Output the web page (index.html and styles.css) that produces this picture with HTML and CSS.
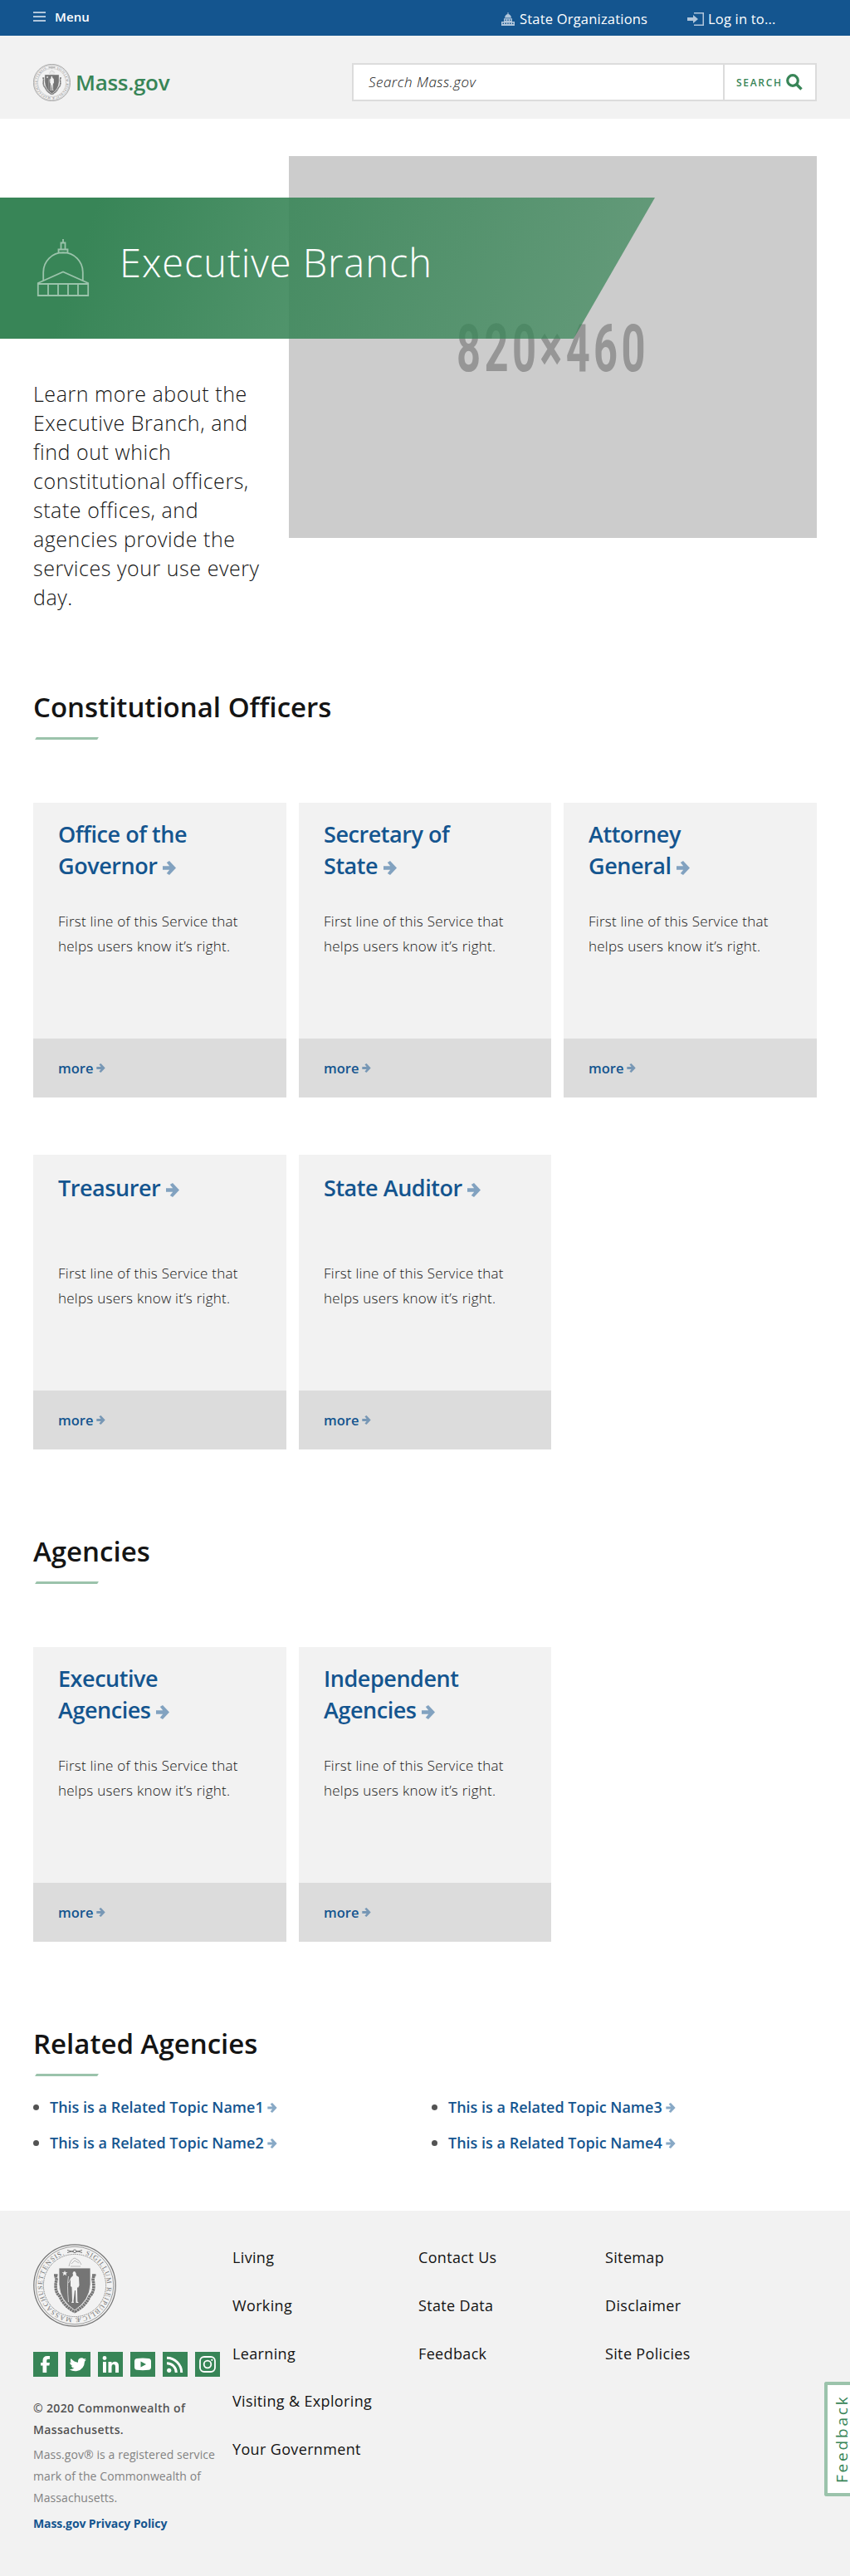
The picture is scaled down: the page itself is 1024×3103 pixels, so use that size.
FILE: index.html
```html
<!DOCTYPE html>
<html lang="en">
<head>
<meta charset="utf-8">
<title>Executive Branch | Mass.gov</title>
<link rel="stylesheet" href="styles.css">
</head>
<body>
<svg class="defs" aria-hidden="true">
  <symbol id="arrow" viewBox="0 0 16 17"><path d="M0 6.200h8.200L4.800 2 8 0l8 8.500L8 17l-3.200-2 3.400-4.200H0z"/></symbol>
</svg>

<div class="topbar">
  <a class="menu" href="#"><svg width="15" height="12" viewBox="0 0 15 12"><path d="M0 0h15v2H0zM0 5h15v2H0zM0 10h15v2H0z"/></svg><span>Menu</span></a>
  <a class="util util-org" href="#"><svg width="16" height="16" viewBox="0 0 16 16"><path fill-rule="evenodd" d="M7.500 0h1v2q3 .7 3.500 4.500H4Q4.500 2.700 7.500 2zM3 7.300h10V11h3v5H0v-5h3zM4.300 8.500V10h1.400V8.500zM7.300 8.500V10h1.400V8.500zM10.300 8.500V10h1.400V8.500zM1.500 12.500V14H3v-1.500zM4.500 12.500V14H6v-1.500zM7.300 12.500V14h1.400v-1.500zM10 12.500V14h1.500v-1.500zM13 12.500V14h1.500v-1.500z"/></svg><span>State Organizations</span></a>
  <a class="util util-login" href="#"><svg width="20" height="16" viewBox="0 0 20 16"><path d="M0 6h7V3l6 5-6 5v-3H0zM8 0h12v16H8v-1.500h10.500v-13H8z"/></svg><span>Log in to...</span></a>
</div>

<header class="header">
  <a class="logo" href="#"><svg width="45" height="45" viewBox="0 0 100 100"><use href="#seal"/></svg><span>Mass.gov</span></a>
  <form class="search">
    <span class="search-field">Search Mass.gov</span>
    <span class="search-button"><span>SEARCH</span><svg width="20" height="20" viewBox="0 0 20 20" fill="none"><circle cx="8" cy="8" r="6.300" stroke-width="3.200"/><path d="M12.500 12.500l6 6" stroke-width="3.400"/></svg></span>
  </form>
</header>

<main>
  <section class="hero">
    <svg class="hero-image" width="636" height="460" viewBox="0 0 636 460"><rect width="636" height="460" fill="#ccc"/><text x="202" y="259" textLength="232" lengthAdjust="spacingAndGlyphs">820×460</text></svg>
    <div class="banner">
      <svg width="64" height="70" viewBox="0 0 64 70" fill="none"><path d="M32 0v4.500M29.500 13V4.500h5V13M26.500 16.500v-4h11v4zM8.200 50.500V40a23.800 23.800 0 0 1 47.600 0v10.500M1.800 54v-1L32 39.500 62.200 53v1M1.800 54h60.400v14H1.800zM14 54v14M26 54v14M38 54v14M50 54v14"/></svg>
      <h1>Executive Branch</h1>
    </div>
    <p class="intro">Learn more about the<br>Executive Branch, and<br>find out which<br>constitutional officers,<br>state offices, and<br>agencies provide the<br>services your use every<br>day.</p>
  </section>

  <section class="section">
    <h2>Constitutional Officers</h2>
    <div class="cards">
      <article class="card"><div class="card-body"><h3>Office of the<br>Governor <svg><use href="#arrow"/></svg></h3><p>First line of this Service that<br>helps users know it’s right.</p></div><a class="more" href="#">more <svg><use href="#arrow"/></svg></a></article>
      <article class="card"><div class="card-body"><h3>Secretary of<br>State <svg><use href="#arrow"/></svg></h3><p>First line of this Service that<br>helps users know it’s right.</p></div><a class="more" href="#">more <svg><use href="#arrow"/></svg></a></article>
      <article class="card"><div class="card-body"><h3>Attorney<br>General <svg><use href="#arrow"/></svg></h3><p>First line of this Service that<br>helps users know it’s right.</p></div><a class="more" href="#">more <svg><use href="#arrow"/></svg></a></article>
      <article class="card"><div class="card-body"><h3 class="single">Treasurer <svg><use href="#arrow"/></svg></h3><p>First line of this Service that<br>helps users know it’s right.</p></div><a class="more" href="#">more <svg><use href="#arrow"/></svg></a></article>
      <article class="card"><div class="card-body"><h3 class="single">State Auditor <svg><use href="#arrow"/></svg></h3><p>First line of this Service that<br>helps users know it’s right.</p></div><a class="more" href="#">more <svg><use href="#arrow"/></svg></a></article>
    </div>
  </section>

  <section class="section">
    <h2>Agencies</h2>
    <div class="cards">
      <article class="card"><div class="card-body"><h3>Executive<br>Agencies <svg><use href="#arrow"/></svg></h3><p>First line of this Service that<br>helps users know it’s right.</p></div><a class="more" href="#">more <svg><use href="#arrow"/></svg></a></article>
      <article class="card"><div class="card-body"><h3>Independent<br>Agencies <svg><use href="#arrow"/></svg></h3><p>First line of this Service that<br>helps users know it’s right.</p></div><a class="more" href="#">more <svg><use href="#arrow"/></svg></a></article>
    </div>
  </section>

  <section class="section related">
    <h2>Related Agencies</h2>
    <ul>
      <li><a href="#">This is a Related Topic Name1 <svg><use href="#arrow"/></svg></a></li>
      <li><a href="#">This is a Related Topic Name3 <svg><use href="#arrow"/></svg></a></li>
      <li><a href="#">This is a Related Topic Name2 <svg><use href="#arrow"/></svg></a></li>
      <li><a href="#">This is a Related Topic Name4 <svg><use href="#arrow"/></svg></a></li>
    </ul>
  </section>
</main>

<footer class="footer">
  <div class="about">
    <svg class="seal" width="100" height="100" viewBox="0 0 100 100">
      <g id="seal">
        <g fill="none" stroke="#757575">
          <circle cx="50" cy="50" r="49.200" stroke-width="1.200"/>
          <circle cx="50" cy="50" r="46.800" stroke-width=".7"/>
          <circle cx="50" cy="50" r="37.600" stroke-width="1" stroke-dasharray="1 .8"/>
          <path d="M25 37.500h4.500M71 37.500h4.500" stroke-width="2.500"/>
          <path d="M27 38l1 5q-3 14 4 20 5 12 18 18.500 13-6.500 18-18.500 7-6 4-20l1-5" stroke-width="3.600" stroke-dasharray="2.600 .5"/>
          <path d="M43 27q2-9 7-10 6 2 8 8M46 24l4-4 5 3M45 27h12" stroke="#bbb"/>
          <path d="M41 7.500l7 2M41 10.500l7-2M59 7.500l-7 2M59 10.500l-7-2"/>
          <circle cx="50" cy="8.800" r="1.800"/>
        </g>
        <path d="M31 29h38v20q-1 19-19 31-18-12-19-31z" fill="#757575" stroke="#f2f2f2" stroke-width=".8"/>
        <path d="M38 32l.9 2.300h2.500l-2 1.500.8 2.500-2.200-1.500-2.200 1.500.8-2.500-2-1.500h2.500z" fill="#f2f2f2"/>
        <path d="M47.500 35q2-4 4 0l.5 3 3 2 .5 10-1.500 3-1-1 .3 17.500 1.700 1.500h-3.500L51 56h-1l-1.500 13 .5 2h-3l1-2-.5-17-1.500-1V41l3-3z" fill="#f2f2f2"/>
        <path d="M42.500 39q-2 10 0 31M45 42l-2.500 5" stroke="#d8d8d8" stroke-width=".9" fill="none"/>
        <path id="ring" d="M50 11a39 39 0 0 1 0 78 39 39 0 0 1 0-78" fill="none"/>
        <text class="seal-text"><textPath href="#ring" startOffset="13" textLength="219">SIGILLUM REIPUBLICÆ MASSACHUSETTENSIS.</textPath></text>
      </g>
    </svg>
    <div class="social">
      <a href="#"><svg viewBox="0 0 30 30"><path d="M11.500 25V16.500H9V13h2.500v-2.500Q11.500 5 17 5h3v3.700h-2.200q-1.600 0-1.600 1.600V13h3.700l-.5 3.500h-3.200V25z"/></svg></a>
      <a href="#"><svg viewBox="0 0 30 30"><path d="M6.500 8q4 4.500 8.500 4.700Q14.500 7.500 19 7.200q2 0 3.200 1.300l2.300-.8-1.500 2.200 2-.5-2 2.100Q22.500 21 14 23q-5 .8-9.300-1.700 3.600 0 5.800-1.700-3-.3-3.900-2.900h1.800Q5.100 15.500 5.200 12.500l1.800.5Q5 11 6.500 8z"/></svg></a>
      <a href="#"><svg viewBox="0 0 30 30"><path d="M6 12h4v13H6zM12.500 12h4v1.800Q18 11.600 20.800 11.700 25 12 25 17v8h-4v-7q0-3-2.100-3-2.400 0-2.400 3v7h-4z"/><circle cx="8" cy="7.500" r="2.400"/></svg></a>
      <a href="#"><svg viewBox="0 0 30 30"><path fill-rule="evenodd" d="M8 8q7-.8 14 0 3 .3 3 3.500v7q0 3-3 3.300-7 .8-14 0-3-.3-3-3.300v-7Q5 8.300 8 8zM12.500 11.500v7l6.500-3.500z"/></svg></a>
      <a href="#"><svg viewBox="0 0 30 30"><circle cx="7.700" cy="22.300" r="2.600"/><path d="M5 13.700A11.300 11.300 0 0 1 16.300 25M5 7.300A17.700 17.700 0 0 1 22.700 25" fill="none" stroke="#fff" stroke-width="3"/></svg></a>
      <a href="#"><svg viewBox="0 0 30 30"><g fill="none" stroke="#fff" stroke-width="1.800"><rect x="6" y="6" width="18" height="18" rx="5"/><circle cx="15" cy="15" r="4.300"/></g><circle cx="20.300" cy="9.800" r="1.100"/></svg></a>
    </div>
    <p class="copyright">© 2020 Commonwealth of<br>Massachusetts.</p>
    <p class="mark">Mass.gov® is a registered service<br>mark of the Commonwealth of<br>Massachusetts.</p>
    <a class="privacy" href="#">Mass.gov Privacy Policy</a>
  </div>
  <nav><a href="#">Living</a><a href="#">Working</a><a href="#">Learning</a><a href="#">Visiting &amp; Exploring</a><a href="#">Your Government</a></nav>
  <nav><a href="#">Contact Us</a><a href="#">State Data</a><a href="#">Feedback</a></nav>
  <nav><a href="#">Sitemap</a><a href="#">Disclaimer</a><a href="#">Site Policies</a></nav>
</footer>
<a class="feedback" href="#"><span>Feedback</span></a>
</body>
</html>
```
FILE: styles.css
```css
* { box-sizing: border-box; }
body { margin: 0; background: #fff; color: #141414; font-family: "Open Sans", "Noto Sans", sans-serif; position: relative; overflow-x: hidden; }
h1, h2, h3, p, ul { margin: 0; padding: 0; font-weight: inherit; }
a { color: inherit; text-decoration: none; }
svg { display: block; }
.defs { width: 0; height: 0; position: absolute; }
.seal-text { font: 8.200px "Liberation Serif", serif; fill: #757575; }

.topbar { height: 43px; background: #14558f; color: #fff; display: flex; align-items: flex-start; padding: 0 40px; }
.topbar a { display: flex; align-items: center; }
.topbar svg { fill: #b1c6db; }
.menu { gap: 11px; height: 40px; font-size: 15px; font-weight: 600; letter-spacing: .1px; margin-right: auto; }
.util { height: 46px; font-size: 16.500px; letter-spacing: .2px; }
.util span { margin-top: -1px; }
.util-org { gap: 6px; width: 224px; }
.util-login { gap: 5px; width: 156px; }

.header { height: 100px; background: #f2f2f2; padding: 33px 40px 0; display: flex; justify-content: space-between; align-items: flex-start; }
.logo { display: flex; align-items: center; gap: 6px; height: 46px; color: #388557; font-size: 26px; font-weight: 600; letter-spacing: -.3px; }
.search { width: 560px; height: 46px; display: flex; border: 2px solid #dcdcdc; background: #fff; }
.search-field { flex: 1; padding-left: 18px; font-size: 17px; font-style: italic; font-weight: 350; letter-spacing: .500px; line-height: 42px; }
.search-button { width: 111px; border-left: 2px solid #dcdcdc; display: flex; align-items: center; gap: 4px; padding-left: 14px; color: #388557; font-size: 12px; font-weight: 600; letter-spacing: 1.700px; }
.search-button svg { stroke: #388557; }

.hero { display: grid; grid-template-columns: 348px 636px; grid-template-rows: 50px 170px 240px auto; padding-top: 45px; }
.hero-image { grid-column: 2; grid-row: 1 / 4; }
.hero-image text { font: 700 80px Roboto, sans-serif; letter-spacing: 7px; fill: #969696; }
.banner { grid-column: 1 / 3; grid-row: 2; z-index: 1; width: 789px; display: flex; align-items: center; padding-left: 44px; gap: 36px; color: #fff; background: linear-gradient(109deg, #388557 14%, rgba(56, 133, 87, .69) 100%); clip-path: polygon(0 0, 100% 0, 691px 100%, 0 100%); }
.banner svg { stroke: #9bc3ab; stroke-width: 1.800; }
.banner h1 { font-size: 47px; font-weight: 300; line-height: 60px; margin-top: -15px; letter-spacing: .950px; }
.intro { grid-column: 1; grid-row: 3 / 5; padding: 49px 0 0 40px; font-size: 25px; line-height: 35px; font-weight: 350; letter-spacing: .550px; white-space: nowrap; }

.section { padding: 0 40px; margin-top: 101px; }
.hero + .section { margin-top: 93px; }
h2 { font-size: 33px; line-height: 44px; font-weight: 600; }
h2::after { content: ""; display: block; width: 75px; height: 3px; margin: 14px 0 0 3px; background: #9bc3ab; transform: skewX(-30deg); }
.cards { margin-top: 76px; display: grid; grid-template-columns: 305px 304px 305px; gap: 69px 15px; }
.card { height: 355px; display: flex; flex-direction: column; background: #f2f2f2; }
.card-body { height: 284px; padding: 19px 30px 0; }
h3 { height: 76px; color: #14558f; font-size: 27px; line-height: 38px; font-weight: 600; letter-spacing: -.450px; white-space: nowrap; }
h3.single { line-height: 42px; }
.card p { margin-top: 33px; font-size: 17px; line-height: 30px; font-weight: 350; letter-spacing: .250px; white-space: nowrap; }
.more { height: 71px; padding: 0 30px; display: flex; align-items: center; gap: 4px; background: #dcdcdc; color: #14558f; font-size: 16.500px; font-weight: 600; }
h3 svg, .more svg, li svg { display: inline-block; fill: #14558f; opacity: .5; }
h3 svg { width: 16px; height: 17px; vertical-align: -1px; }
.more svg { width: 11px; height: 11px; }

.related ul { margin-top: 22px; display: grid; grid-template-columns: 480px 1fr; row-gap: 13px; list-style: none; }
.related li { display: flex; align-items: center; gap: 13px; height: 30px; color: #14558f; font-size: 18px; font-weight: 600; line-height: 30px; white-space: nowrap; }
.related li::before { content: ""; width: 7px; height: 7px; border-radius: 50%; background: #535353; }
li svg { width: 12px; height: 12px; }

.footer { margin-top: 67px; height: 440px; padding: 28px 40px 0; background: #f2f2f2; display: grid; grid-template-columns: 240px 224px 225px 1fr; align-items: start; }
.about { padding-top: 12px; font-size: 14px; line-height: 26px; white-space: nowrap; }
.social { display: flex; gap: 9px; margin: 30px 0 25px; }
.social a { width: 30px; height: 30px; background: #388557; }
.social svg { fill: #fff; }
.copyright { color: #535353; font-weight: 600; letter-spacing: .350px; }
.mark { margin: 4px 0 5px; color: #828282; letter-spacing: .080px; }
.privacy { color: #14558f; font-weight: 700; letter-spacing: -.1px; }
.footer nav { display: flex; flex-direction: column; font-size: 18px; line-height: 57.800px; letter-spacing: .350px; }
.feedback { position: absolute; right: 0; top: 2869px; width: 31px; height: 138px; border: 4px solid #9bc3ab; border-right: 0; border-radius: 3px 0 0 3px; background: #fff; color: #388557; font-size: 19px; font-weight: 500; letter-spacing: 2.800px; line-height: 27px; text-align: center; overflow: hidden; }
.feedback span { display: block; width: 27px; height: 130px; margin-left: 4px; writing-mode: vertical-rl; transform: rotate(180deg); }
```
